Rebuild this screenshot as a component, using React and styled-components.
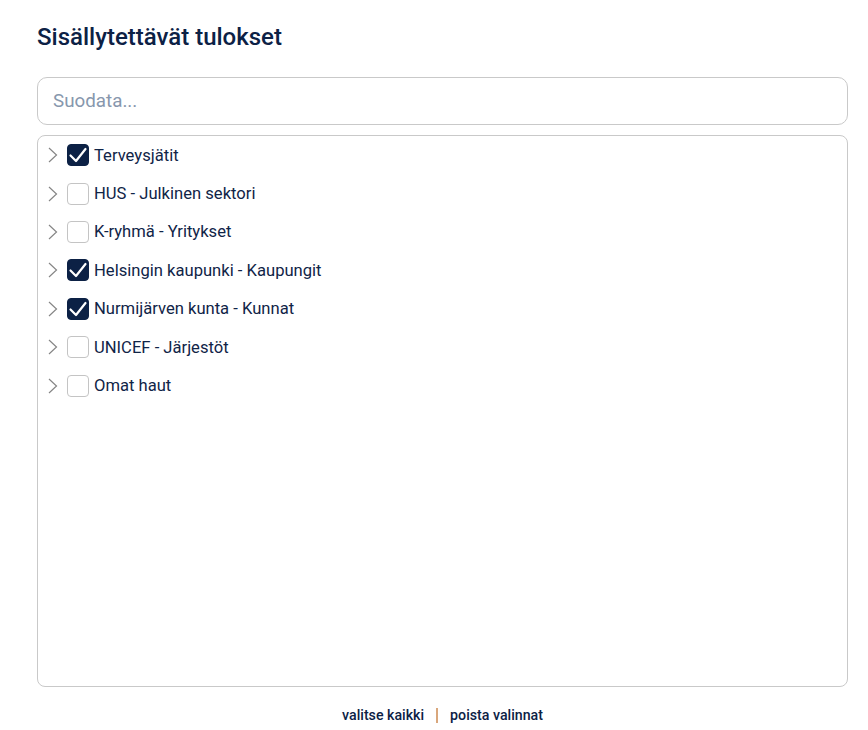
import React, { useState } from "react";
import styled, { createGlobalStyle } from "styled-components";

const Global = createGlobalStyle`
  html, body { margin: 0; padding: 0; background: #ffffff; }
  body { font-family: Roboto, "Noto Sans", sans-serif; }
  * { box-sizing: border-box; }
`;

const Page = styled.div`
  width: 868px;
  padding: 22px 20px 0 37px;
  display: flex;
  flex-direction: column;
`;

const Title = styled.h2`
  margin: 0;
  font-size: 24px;
  font-weight: 500;
  line-height: 30px;
  color: #0c2145;
`;

const FilterInput = styled.input`
  margin-top: 25px;
  width: 811px;
  height: 48px;
  border: 1px solid #c9c9c9;
  border-radius: 10px;
  padding: 0 15px;
  font-family: Roboto, sans-serif;
  font-size: 18.8px;
  color: #0c2145;
  outline: none;
  &::placeholder { color: #8797ad; }
`;

const List = styled.div`
  margin-top: 10px;
  width: 811px;
  height: 552px;
  border: 1px solid #c9c9c9;
  border-radius: 8px;
  display: flex;
  flex-direction: column;
`;

const Row = styled.div`
  height: 38.4px;
  display: flex;
  align-items: center;
  padding-left: 8px;
  cursor: pointer;
`;

const Chevron = styled.svg`
  width: 14px;
  height: 16px;
  flex: none;
`;

const Box = styled.span`
  margin-left: 7px;
  width: 22px;
  height: 22px;
  flex: none;
  border-radius: 4px;
  border: 1px solid ${(p) => (p.$checked ? "#0c2145" : "#c4c4c4")};
  background: ${(p) => (p.$checked ? "#0c2145" : "#ffffff")};
  display: flex;
  align-items: center;
  justify-content: center;
`;

const Label = styled.span`
  margin-left: 5px;
  font-size: 16.6px;
  color: #102447;
`;

const Footer = styled.div`
  width: 811px;
  display: flex;
  justify-content: center;
  align-items: center;
  gap: 12px;
  margin-top: 20px;
  font-size: 14.2px;
  font-weight: 500;
  color: #0c2145;
`;

const Link = styled.span`
  cursor: pointer;
`;

const Sep = styled.span`
  width: 2px;
  height: 15px;
  background: #d9a77c;
`;

const items = [
  ["Terveysjätit", true],
  ["HUS - Julkinen sektori", false],
  ["K-ryhmä - Yritykset", false],
  ["Helsingin kaupunki - Kaupungit", true],
  ["Nurmijärven kunta - Kunnat", true],
  ["UNICEF - Järjestöt", false],
  ["Omat haut", false],
];

export default function App() {
  const [state, setState] = useState(items.map((i) => i[1]));
  return (
    <Page>
      <Global />
      <Title>Sisällytettävät tulokset</Title>
      <FilterInput placeholder="Suodata..." />
      <List>
        {items.map(([label], i) => (
          <Row key={label} onClick={() => setState((s) => s.map((v, j) => (j === i ? !v : v)))}>
            <Chevron viewBox="0 0 14 16">
              <path d="M3 1 L10.5 8 L3 15" fill="none" stroke="#858585" strokeWidth="1.2" />
            </Chevron>
            <Box $checked={state[i]}>
              {state[i] && (
                <svg width="20" height="20" viewBox="0 0 20 20">
                  <path d="M2.5 10.5 L8 16 L17.5 4" fill="none" stroke="#ffffff" strokeWidth="2.2" strokeLinecap="round" strokeLinejoin="round" />
                </svg>
              )}
            </Box>
            <Label>{label}</Label>
          </Row>
        ))}
      </List>
      <Footer>
        <Link>valitse kaikki</Link>
        <Sep />
        <Link>poista valinnat</Link>
      </Footer>
    </Page>
  );
}
